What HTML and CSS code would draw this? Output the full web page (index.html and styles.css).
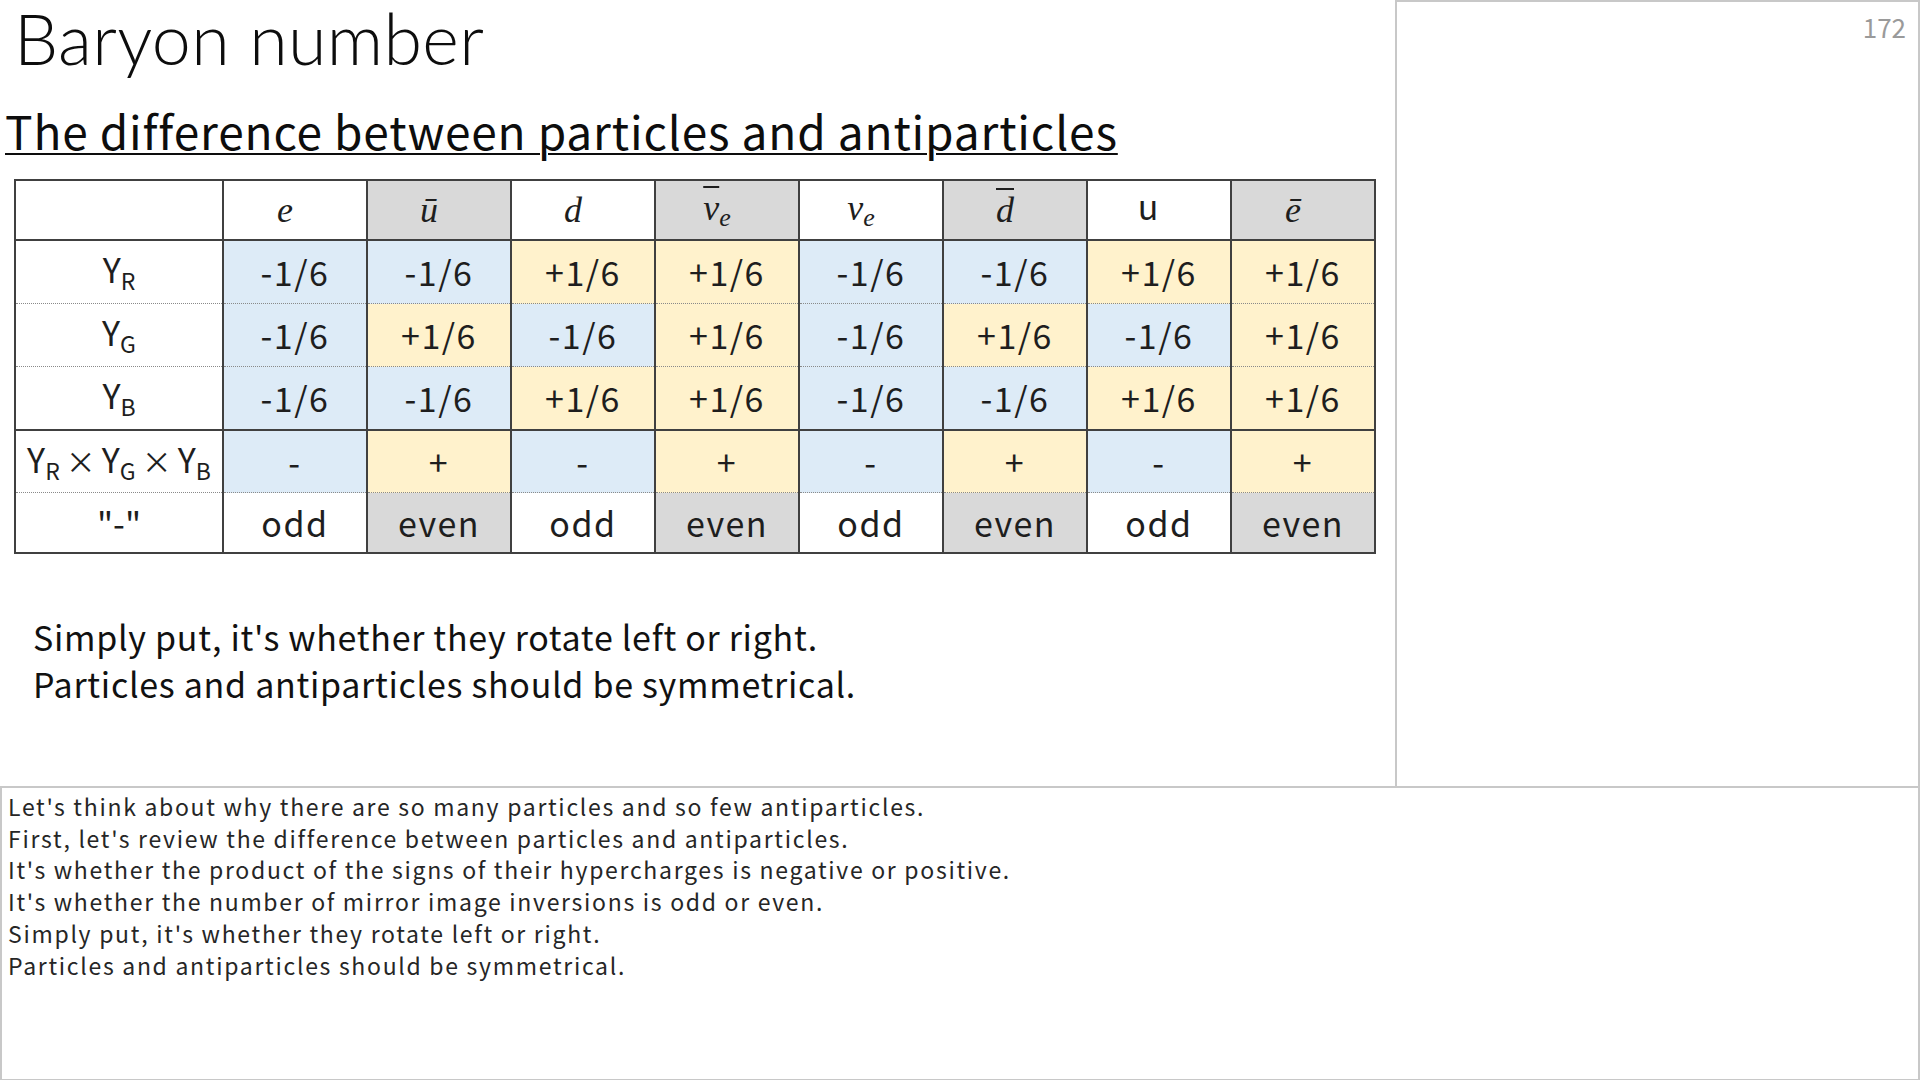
FILE: index.html
```html
<!DOCTYPE html>
<html lang="en">
<head>
<meta charset="utf-8">
<title>Baryon number</title>
<link rel="stylesheet" href="styles.css">
</head>
<body>
<div class="top">
  <div class="slide">
    <h1 class="title">Baryon number</h1>
    <h2 class="subtitle"><span class="ul">The difference between particles and antiparticles</span></h2>
    <table class="grid">
      <colgroup>
        <col class="c-label">
        <col class="c-val"><col class="c-val"><col class="c-val"><col class="c-val">
        <col class="c-val"><col class="c-val"><col class="c-val"><col class="c-val">
      </colgroup>
      <tr class="head">
        <td></td>
        <td class="math">e</td>
        <td class="math gray">ū</td>
        <td class="math">d</td>
        <td class="math gray"><span class="bar">ν</span><sub>e</sub></td>
        <td class="math">ν<sub>e</sub></td>
        <td class="math gray"><span class="bar">d</span></td>
        <td class="plain"><span class="raise">u</span></td>
        <td class="math gray">ē</td>
      </tr>
      <tr class="r-first">
        <td class="lbl">Y<sub>R</sub></td>
        <td class="b">-1/6</td><td class="b">-1/6</td><td class="y">+1/6</td><td class="y">+1/6</td>
        <td class="b">-1/6</td><td class="b">-1/6</td><td class="y">+1/6</td><td class="y">+1/6</td>
      </tr>
      <tr class="r-dot">
        <td class="lbl">Y<sub>G</sub></td>
        <td class="b">-1/6</td><td class="y">+1/6</td><td class="b">-1/6</td><td class="y">+1/6</td>
        <td class="b">-1/6</td><td class="y">+1/6</td><td class="b">-1/6</td><td class="y">+1/6</td>
      </tr>
      <tr class="r-dot">
        <td class="lbl">Y<sub>B</sub></td>
        <td class="b">-1/6</td><td class="b">-1/6</td><td class="y">+1/6</td><td class="y">+1/6</td>
        <td class="b">-1/6</td><td class="b">-1/6</td><td class="y">+1/6</td><td class="y">+1/6</td>
      </tr>
      <tr class="r-solid">
        <td class="lbl prod">Y<sub>R</sub><span class="times">×</span>Y<sub>G</sub><span class="times">×</span>Y<sub>B</sub></td>
        <td class="b">-</td><td class="y">+</td><td class="b">-</td><td class="y">+</td>
        <td class="b">-</td><td class="y">+</td><td class="b">-</td><td class="y">+</td>
      </tr>
      <tr class="r-dot r-last">
        <td class="lbl">"-"</td>
        <td>odd</td><td class="gray">even</td><td>odd</td><td class="gray">even</td>
        <td>odd</td><td class="gray">even</td><td>odd</td><td class="gray">even</td>
      </tr>
    </table>
    <div class="body-text">
      <p>Simply put, it's whether they rotate left or right.</p>
      <p>Particles and antiparticles should be symmetrical.</p>
    </div>
  </div>
  <div class="side">
    <div class="pagenum">172</div>
  </div>
</div>
<div class="notes">
  <p>Let's think about why there are so many particles and so few antiparticles.</p>
  <p>First, let's review the difference between particles and antiparticles.</p>
  <p>It's whether the product of the signs of their hypercharges is negative or positive.</p>
  <p>It's whether the number of mirror image inversions is odd or even.</p>
  <p>Simply put, it's whether they rotate left or right.</p>
  <p>Particles and antiparticles should be symmetrical.</p>
</div>
</body>
</html>
```
FILE: styles.css
```css
html, body {
  margin: 0;
  padding: 0;
  background: #ffffff;
}
body {
  width: 1920px;
  height: 1080px;
  overflow: hidden;
  font-family: "Noto Sans CJK JP", "Noto Sans", sans-serif;
  color: #111111;
}
.top {
  display: flex;
  height: 786px;
}
.slide {
  flex: none;
  width: 1395px;
  display: flex;
  flex-direction: column;
}
.title {
  margin: 0;
  padding-left: 14px;
  height: 76px;
  font-family: Lato, Roboto, "Noto Sans", sans-serif;
  font-size: 70px;
  line-height: 76px;
  font-weight: 300;
  letter-spacing: 0.3px;
  color: #0d0d0d;
}
.subtitle {
  margin: 26px 0 0 0;
  padding-left: 5px;
  height: 56px;
  font-size: 46px;
  line-height: 56px;
  font-weight: 400;
  letter-spacing: 0.85px;
  color: #0d0d0d;
}
.ul {
  text-decoration: underline;
  text-decoration-thickness: 2px;
  text-underline-offset: 3px;
}
.grid {
  margin: 21px 0 0 14px;
  border-collapse: collapse;
  table-layout: fixed;
  width: 1360px;
  font-size: 34px;
  letter-spacing: 1.5px;
  color: #1e1e1e;
}
.c-label { width: 208px; }
.c-val { width: 144px; }
.grid td {
  padding: 0;
  text-align: center;
  vertical-align: middle;
  line-height: 1;
  border-left: 2px solid #404040;
  border-right: 2px solid #404040;
  height: 62px;
}
.grid tr.head td {
  height: 58px;
  border-top: 2px solid #404040;
  border-bottom: 2px solid #404040;
}
.grid tr.r-dot td {
  border-top: 1px dotted #8a8a8a;
}
.grid tr.r-solid td {
  border-top: 2px solid #404040;
  height: 61px;
}
.grid tr.r-last td {
  border-bottom: 2px solid #404040;
  height: 59px;
}
.grid td.b { background: #ddebf7; }
.grid td.y { background: #fff2cc; }
.grid td.gray { background: #d9d9d9; }
.grid td.math {
  font-family: "Liberation Serif", "DejaVu Serif", serif;
  font-style: italic;
  font-size: 36px;
  letter-spacing: 0;
  padding-right: 20px;
}
.grid td.math sub {
  font-size: 26px;
  vertical-align: -6px;
  line-height: 1;
}
.bar {
  text-decoration: overline;
  text-decoration-thickness: 2px;
}
.grid td.plain {
  letter-spacing: 0;
  padding-right: 22px;
}
.raise {
  vertical-align: 8px;
}
.grid td.lbl {
  letter-spacing: 0;
}
.grid td.lbl sub {
  font-size: 23px;
  vertical-align: -7px;
  line-height: 1;
}
.times {
  display: inline-block;
  margin: 0 6px;
  font-size: 30px;
}
.body-text {
  margin: 59px 0 0 33px;
  font-size: 34px;
  line-height: 47px;
  letter-spacing: 0.7px;
  color: #111111;
}
.body-text p {
  margin: 0;
}
.side {
  flex: 1;
  border: 2px solid #c8c8c8;
  border-bottom: none;
  display: flex;
  justify-content: flex-end;
  align-items: flex-start;
}
.pagenum {
  padding: 8px 12px 0 0;
  font-size: 26px;
  line-height: 34px;
  color: #9a9a9a;
}
.notes {
  height: 288px;
  border: 2px solid #c8c8c8;
  padding: 3px 0 0 6px;
  font-size: 23px;
  line-height: 31.7px;
  letter-spacing: 1.7px;
  color: #262626;
}
.notes p {
  margin: 0;
}
```
